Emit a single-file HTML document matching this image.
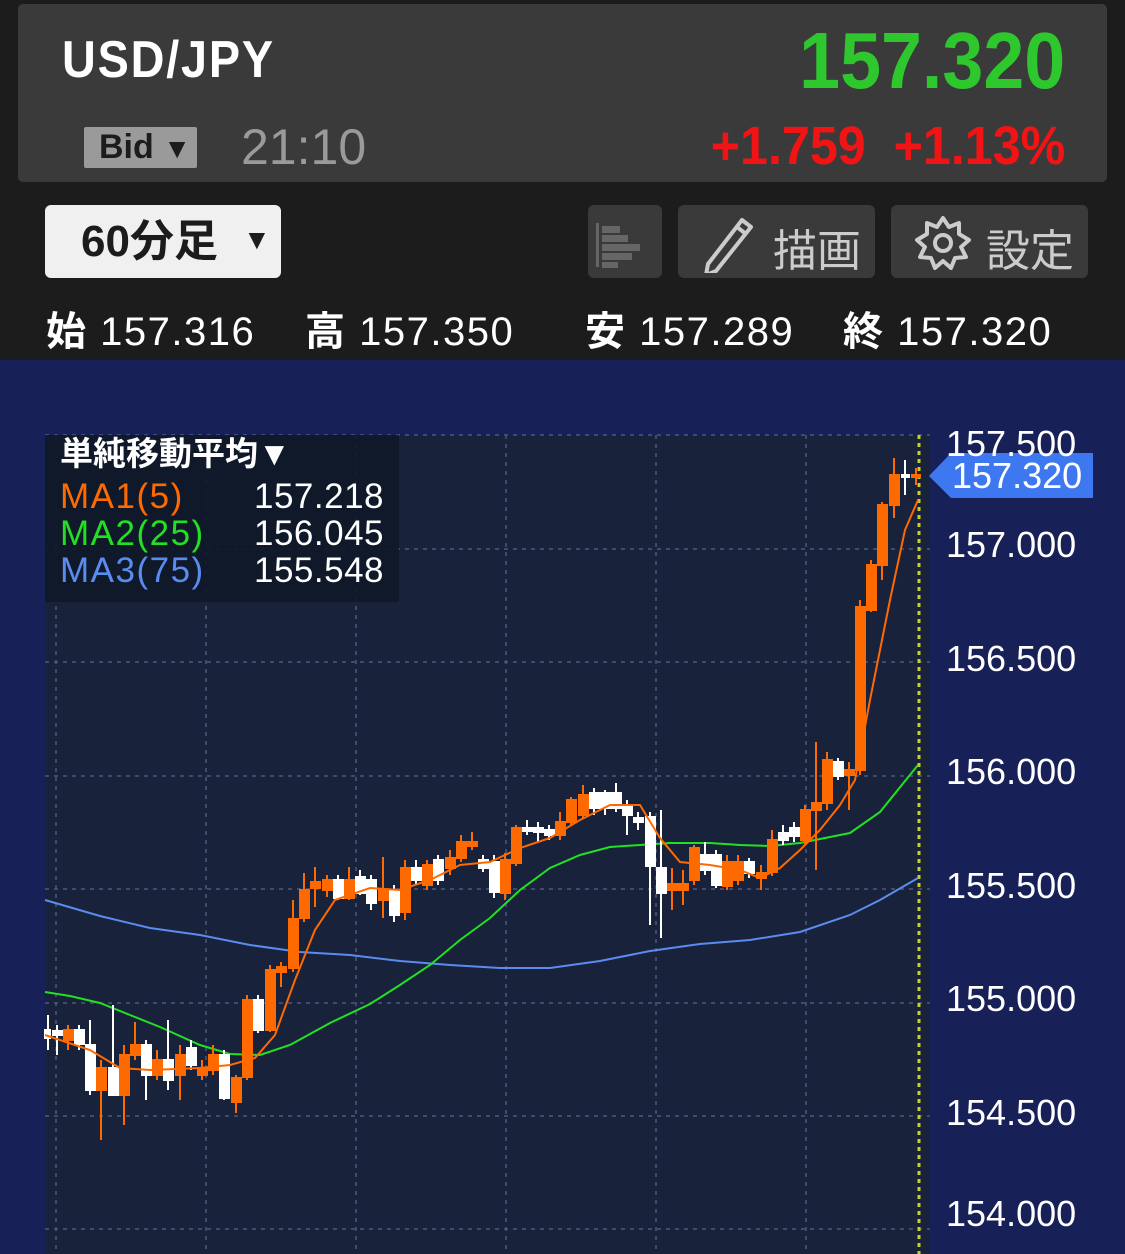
<!DOCTYPE html>
<html><head><meta charset="utf-8"><style>
*{margin:0;padding:0;box-sizing:border-box}
body{width:1125px;height:1254px;background:#1c1c1c;font-family:"Liberation Sans","Noto Sans CJK JP",sans-serif;position:relative;overflow:hidden;color:#fff}
.a{position:absolute;white-space:nowrap}
.hdr{left:18px;top:4px;width:1089px;height:178px;background:#3a3a3a;border-radius:5px}
.btn{position:absolute;top:205px;height:73px;background:#3a3a3a;border-radius:6px}
.ax{position:absolute;left:946px;font-size:36px;line-height:40px}
</style></head><body>
<div class="a hdr"></div>
<div class="a" style="left:62px;top:30px;font-size:52px;font-weight:bold;letter-spacing:2px;line-height:60px;transform:scaleX(0.9);transform-origin:left">USD/JPY</div>
<div class="a" style="right:60px;top:18px;font-size:80px;font-weight:bold;color:#2ec82e;line-height:86px;transform:scaleX(0.92);transform-origin:right">157.320</div>
<div class="a" style="left:84px;top:127px;width:113px;height:41px;background:#9a9a9a;border-radius:2px;color:#1c1c1c;font-size:34px;line-height:41px;padding-left:15px;font-weight:bold">Bid <span style="font-size:28px">▼</span></div>
<div class="a" style="left:241px;top:118px;font-size:50px;color:#9a9a9a;line-height:58px">21:10</div>
<div class="a" style="right:60px;top:116px;font-size:54px;font-weight:bold;color:#f21414;line-height:60px;transform:scaleX(0.93);transform-origin:right">+1.759&nbsp;&nbsp;+1.13%</div>

<div class="a" style="left:45px;top:205px;width:236px;height:73px;background:#f0f0f0;border-radius:6px;color:#1c1c1c;font-size:44px;font-weight:bold;line-height:73px;padding-left:36px">60分足<span style="font-size:28px;position:absolute;left:198px;top:-2px">▼</span></div>
<div class="btn" style="left:588px;width:74px"><svg width="74" height="73"><rect x="8" y="18" width="3" height="44" fill="#666"/><rect x="14" y="21" width="18" height="7" fill="#666"/><rect x="14" y="30" width="26" height="7" fill="#666"/><rect x="14" y="39" width="38" height="7" fill="#666"/><rect x="14" y="48" width="30" height="7" fill="#666"/><rect x="14" y="57" width="16" height="6" fill="#666"/></svg></div>
<div class="btn" style="left:678px;width:197px"><svg class="a" style="left:22px;top:8px" width="70" height="60"><path d="M42 7 L51 14 L16 58 L6 62 L8 51 Z M37 14 L46 21" fill="none" stroke="#ccc" stroke-width="4" stroke-linejoin="round"/></svg><div class="a" style="left:95px;top:10px;font-size:44px;color:#ccc">描画</div></div>
<div class="btn" style="left:891px;width:197px"><svg class="a" style="left:22px;top:8px" width="60" height="60"><path d="M30 5 L36 14 L46 10 L46 21 L56 27 L48 34 L53 44 L42 45 L38 55 L30 48 L22 55 L18 45 L7 44 L12 34 L4 27 L14 21 L14 10 L24 14 Z" fill="none" stroke="#ccc" stroke-width="4" stroke-linejoin="round"/><circle cx="30" cy="30" r="8" fill="none" stroke="#ccc" stroke-width="4"/></svg><div class="a" style="left:95px;top:10px;font-size:44px;color:#ccc">設定</div></div>

<div class="a" style="left:46px;top:308px;font-size:40px;line-height:48px;letter-spacing:1.5px"><b>始</b> 157.316</div>
<div class="a" style="left:305px;top:308px;font-size:40px;line-height:48px;letter-spacing:1.5px"><b>高</b> 157.350</div>
<div class="a" style="left:585px;top:308px;font-size:40px;line-height:48px;letter-spacing:1.5px"><b>安</b> 157.289</div>
<div class="a" style="left:843px;top:308px;font-size:40px;line-height:48px;letter-spacing:1.5px"><b>終</b> 157.320</div>

<div class="a" style="left:0;top:360px;width:1125px;height:894px;background:#182058"></div>
<svg class="a" style="left:0;top:0" width="1125" height="1254">
<rect x="45" y="435" width="885" height="819" fill="#18223a"/>
<g stroke="#4a5880" stroke-width="1.5" stroke-dasharray="4 5">
<line x1="45" y1="435" x2="930" y2="435"/><line x1="45" y1="549" x2="930" y2="549"/><line x1="45" y1="662" x2="930" y2="662"/><line x1="45" y1="776" x2="930" y2="776"/><line x1="45" y1="889" x2="930" y2="889"/><line x1="45" y1="1003" x2="930" y2="1003"/><line x1="45" y1="1116" x2="930" y2="1116"/><line x1="45" y1="1229" x2="930" y2="1229"/>
<line x1="56" y1="435" x2="56" y2="1254"/><line x1="206" y1="435" x2="206" y2="1254"/><line x1="356" y1="435" x2="356" y2="1254"/><line x1="506" y1="435" x2="506" y2="1254"/><line x1="656" y1="435" x2="656" y2="1254"/><line x1="806" y1="435" x2="806" y2="1254"/>
</g>
<line x1="919" y1="435" x2="919" y2="1254" stroke="#c8d020" stroke-width="3" stroke-dasharray="4 4"/>
<polyline fill="none" stroke="#5a8cf0" stroke-width="2" points="45,900 100,916 150,928 200,935 250,945 300,952 350,955 400,961 450,965 500,968 550,968 600,961 650,951 700,944 750,940 800,932 850,915 880,900 918,878"/>
<polyline fill="none" stroke="#22e022" stroke-width="2" points="45,992 70,996 100,1003 130,1015 160,1027 200,1045 230,1054 260,1055 290,1045 330,1023 370,1004 400,985 430,965 460,940 490,918 520,890 550,868 580,855 610,847 640,845 670,843 710,843 740,845 770,846 800,843 850,833 880,812 918,765"/>
<g stroke-width="2">
<g stroke="#fff" fill="#fff">
<line x1="48" y1="1015" x2="48" y2="1050"/><rect x="45" y="1030" width="5" height="8"/>
<line x1="57" y1="1025" x2="57" y2="1055"/><rect x="53" y="1031" width="9" height="4"/>
<line x1="79" y1="1025" x2="79" y2="1050"/><rect x="75" y="1030" width="9" height="14"/>
<line x1="90" y1="1020" x2="90" y2="1095"/><rect x="86" y="1045" width="9" height="45"/>
<line x1="113" y1="1005" x2="113" y2="1095"/><rect x="109" y="1068" width="9" height="27"/>
<line x1="146" y1="1040" x2="146" y2="1100"/><rect x="142" y="1045" width="9" height="30"/>
<line x1="168" y1="1020" x2="168" y2="1090"/><rect x="164" y="1060" width="9" height="20"/>
<line x1="191" y1="1040" x2="191" y2="1070"/><rect x="187" y="1048" width="9" height="17"/>
<line x1="224" y1="1050" x2="224" y2="1100"/><rect x="220" y="1055" width="9" height="43"/>
<line x1="258" y1="995" x2="258" y2="1033"/><rect x="254" y="1000" width="9" height="30"/>
<line x1="338" y1="875" x2="338" y2="900"/><rect x="334" y="880" width="9" height="18"/>
<line x1="360" y1="870" x2="360" y2="895"/><rect x="356" y="877" width="9" height="16"/>
<line x1="371" y1="875" x2="371" y2="910"/><rect x="367" y="880" width="9" height="23"/>
<line x1="394" y1="885" x2="394" y2="922"/><rect x="390" y="890" width="9" height="25"/>
<line x1="416" y1="860" x2="416" y2="885"/><rect x="412" y="868" width="9" height="12"/>
<line x1="438" y1="855" x2="438" y2="885"/><rect x="434" y="860" width="9" height="20"/>
<line x1="483" y1="855" x2="483" y2="872"/><rect x="479" y="860" width="9" height="8"/>
<line x1="494" y1="855" x2="494" y2="898"/><rect x="490" y="862" width="9" height="30"/>
<line x1="527" y1="820" x2="527" y2="835"/><rect x="523" y="828" width="9" height="3"/>
<line x1="538" y1="822" x2="538" y2="842"/><rect x="534" y="828" width="9" height="4"/>
<line x1="549" y1="825" x2="549" y2="840"/><rect x="545" y="830" width="9" height="5"/>
<line x1="594" y1="788" x2="594" y2="815"/><rect x="590" y="793" width="9" height="15"/>
<line x1="605" y1="790" x2="605" y2="815"/><rect x="601" y="793" width="9" height="15"/>
<line x1="616" y1="783" x2="616" y2="812"/><rect x="612" y="793" width="9" height="15"/>
<line x1="627" y1="800" x2="627" y2="835"/><rect x="623" y="805" width="9" height="10"/>
<line x1="638" y1="812" x2="638" y2="830"/><rect x="634" y="818" width="9" height="4"/>
<line x1="650" y1="812" x2="650" y2="925"/><rect x="646" y="817" width="9" height="49"/>
<line x1="661" y1="810" x2="661" y2="938"/><rect x="657" y="868" width="9" height="25"/>
<line x1="705" y1="842" x2="705" y2="875"/><rect x="701" y="855" width="9" height="15"/>
<line x1="716" y1="850" x2="716" y2="888"/><rect x="712" y="855" width="9" height="30"/>
<line x1="749" y1="858" x2="749" y2="878"/><rect x="745" y="862" width="9" height="11"/>
<line x1="783" y1="825" x2="783" y2="845"/><rect x="779" y="833" width="9" height="7"/>
<line x1="794" y1="822" x2="794" y2="842"/><rect x="790" y="828" width="9" height="8"/>
<line x1="838" y1="758" x2="838" y2="780"/><rect x="834" y="762" width="9" height="14"/>
<line x1="905" y1="460" x2="905" y2="495"/><rect x="902" y="475" width="7" height="2"/>
</g>
<g stroke="#ff6a00" fill="#ff6a00">
<line x1="68" y1="1025" x2="68" y2="1050"/><rect x="64" y="1030" width="9" height="10"/>
<line x1="101" y1="1060" x2="101" y2="1140"/><rect x="97" y="1068" width="9" height="22"/>
<line x1="124" y1="1045" x2="124" y2="1125"/><rect x="120" y="1055" width="9" height="40"/>
<line x1="135" y1="1022" x2="135" y2="1060"/><rect x="131" y="1045" width="9" height="10"/>
<line x1="157" y1="1050" x2="157" y2="1080"/><rect x="153" y="1060" width="9" height="15"/>
<line x1="180" y1="1045" x2="180" y2="1100"/><rect x="176" y="1055" width="9" height="20"/>
<line x1="202" y1="1060" x2="202" y2="1080"/><rect x="198" y="1068" width="9" height="7"/>
<line x1="213" y1="1045" x2="213" y2="1075"/><rect x="209" y="1055" width="9" height="15"/>
<line x1="236" y1="1075" x2="236" y2="1113"/><rect x="232" y="1078" width="9" height="24"/>
<line x1="247" y1="995" x2="247" y2="1080"/><rect x="243" y="1000" width="9" height="77"/>
<line x1="270" y1="965" x2="270" y2="1032"/><rect x="266" y="970" width="9" height="60"/>
<line x1="281" y1="962" x2="281" y2="987"/><rect x="277" y="967" width="9" height="5"/>
<line x1="293" y1="900" x2="293" y2="972"/><rect x="289" y="919" width="9" height="49"/>
<line x1="304" y1="873" x2="304" y2="922"/><rect x="300" y="890" width="9" height="28"/>
<line x1="315" y1="867" x2="315" y2="907"/><rect x="311" y="882" width="9" height="6"/>
<line x1="327" y1="875" x2="327" y2="897"/><rect x="323" y="880" width="9" height="10"/>
<line x1="349" y1="867" x2="349" y2="900"/><rect x="345" y="880" width="9" height="18"/>
<line x1="383" y1="857" x2="383" y2="918"/><rect x="379" y="890" width="9" height="10"/>
<line x1="405" y1="860" x2="405" y2="920"/><rect x="401" y="868" width="9" height="44"/>
<line x1="427" y1="860" x2="427" y2="890"/><rect x="423" y="865" width="9" height="20"/>
<line x1="450" y1="850" x2="450" y2="875"/><rect x="446" y="858" width="9" height="10"/>
<line x1="461" y1="835" x2="461" y2="862"/><rect x="457" y="842" width="9" height="16"/>
<line x1="472" y1="832" x2="472" y2="850"/><rect x="468" y="842" width="9" height="4"/>
<line x1="505" y1="853" x2="505" y2="900"/><rect x="501" y="860" width="9" height="33"/>
<line x1="516" y1="825" x2="516" y2="866"/><rect x="512" y="828" width="9" height="35"/>
<line x1="560" y1="812" x2="560" y2="840"/><rect x="556" y="822" width="9" height="13"/>
<line x1="571" y1="797" x2="571" y2="825"/><rect x="567" y="800" width="9" height="22"/>
<line x1="583" y1="785" x2="583" y2="818"/><rect x="579" y="795" width="9" height="20"/>
<line x1="672" y1="868" x2="672" y2="910"/><rect x="668" y="884" width="9" height="6"/>
<line x1="683" y1="870" x2="683" y2="905"/><rect x="679" y="884" width="9" height="6"/>
<line x1="694" y1="845" x2="694" y2="885"/><rect x="690" y="848" width="9" height="32"/>
<line x1="727" y1="855" x2="727" y2="890"/><rect x="723" y="862" width="9" height="24"/>
<line x1="738" y1="855" x2="738" y2="885"/><rect x="734" y="862" width="9" height="18"/>
<line x1="761" y1="865" x2="761" y2="890"/><rect x="757" y="873" width="9" height="5"/>
<line x1="772" y1="830" x2="772" y2="876"/><rect x="768" y="840" width="9" height="32"/>
<line x1="805" y1="805" x2="805" y2="845"/><rect x="801" y="810" width="9" height="30"/>
<line x1="816" y1="742" x2="816" y2="870"/><rect x="812" y="803" width="9" height="7"/>
<line x1="827" y1="752" x2="827" y2="810"/><rect x="823" y="760" width="9" height="43"/>
<line x1="849" y1="762" x2="849" y2="810"/><rect x="845" y="770" width="9" height="5"/>
<line x1="860" y1="600" x2="860" y2="775"/><rect x="856" y="607" width="9" height="163"/>
<line x1="871" y1="560" x2="871" y2="612"/><rect x="867" y="565" width="9" height="45"/>
<line x1="882" y1="502" x2="882" y2="580"/><rect x="878" y="505" width="9" height="60"/>
<line x1="894" y1="458" x2="894" y2="518"/><rect x="890" y="475" width="9" height="30"/>
<line x1="916" y1="468" x2="916" y2="485"/><rect x="912" y="475" width="8" height="2"/>
</g>
</g>
<polyline fill="none" stroke="#ff6a00" stroke-width="2" points="45,1035 90,1050 120,1068 150,1070 200,1068 230,1065 255,1058 275,1035 295,980 315,930 335,900 370,888 400,890 430,880 460,865 490,862 520,848 550,838 580,820 610,805 640,805 660,838 680,862 710,865 740,870 760,878 780,868 800,850 820,830 840,805 855,780 870,700 890,600 905,530 918,500"/>
<rect x="45" y="435" width="354" height="167" fill="#101828" opacity="0.9"/>
<path d="M929 476 L951 453 L1093 453 L1093 498 L951 498 Z" fill="#3d78f0"/>
</svg>
<div class="a" style="left:60px;top:433px;font-size:33px;font-weight:bold;line-height:42px">単純移動平均▼</div>
<div class="a" style="left:60px;top:478px;font-size:35px;line-height:37px;letter-spacing:1.5px;color:#ff6a00">MA1(5)</div>
<div class="a" style="left:60px;top:515px;font-size:35px;line-height:37px;letter-spacing:1.5px;color:#22e022">MA2(25)</div>
<div class="a" style="left:60px;top:552px;font-size:35px;line-height:37px;letter-spacing:1.5px;color:#5a8cf0">MA3(75)</div>
<div class="a" style="left:254px;top:478px;font-size:35px;line-height:37px;letter-spacing:0.5px">157.218<br>156.045<br>155.548</div>
<div class="ax" style="top:424px">157.500</div>
<div class="ax" style="top:456px;left:952px">157.320</div>
<div class="ax" style="top:525px">157.000</div>
<div class="ax" style="top:639px">156.500</div>
<div class="ax" style="top:752px">156.000</div>
<div class="ax" style="top:866px">155.500</div>
<div class="ax" style="top:979px">155.000</div>
<div class="ax" style="top:1093px">154.500</div>
<div class="ax" style="top:1194px">154.000</div>
</body></html>
